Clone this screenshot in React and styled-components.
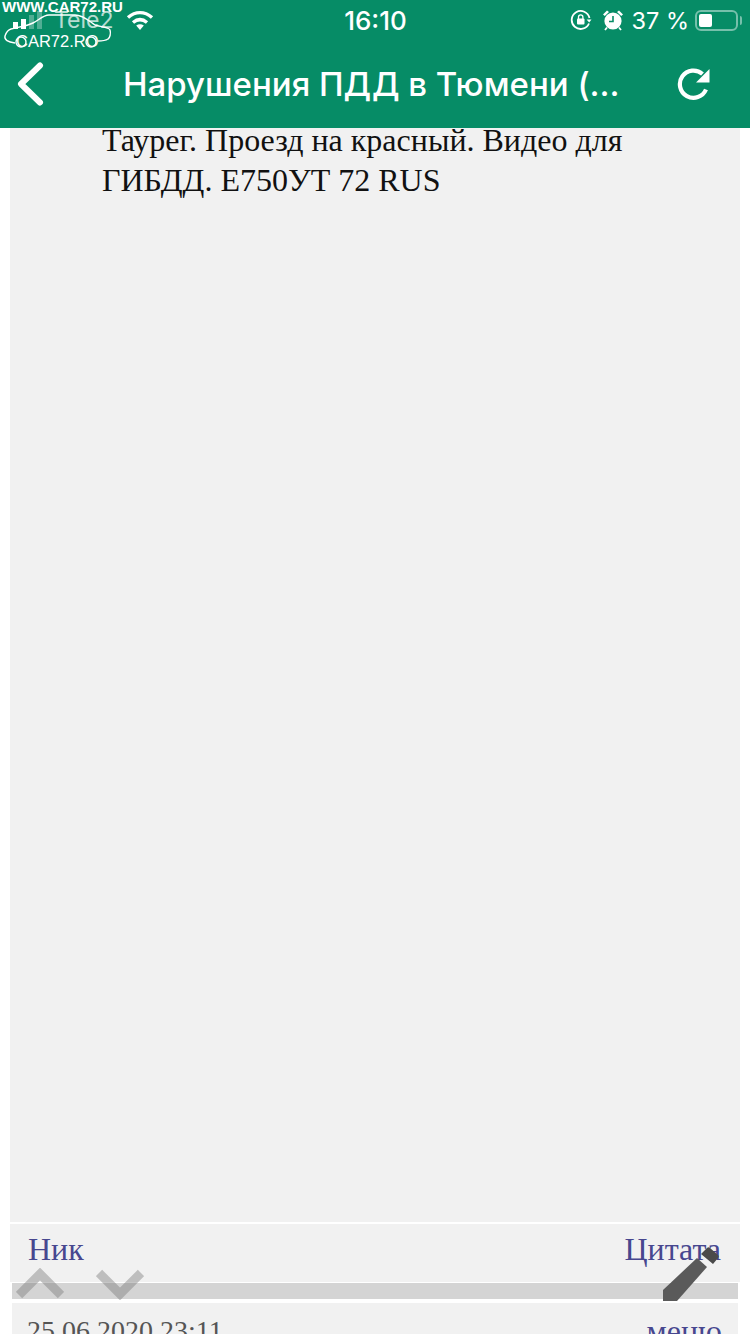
import styled, { createGlobalStyle } from 'styled-components';

const Global = createGlobalStyle`
	html, body {
		margin: 0;
		padding: 0;
		background: #fff;
	}
`

const Page = styled.div`
	position: relative;
	width: 750px;
	height: 1334px;
	overflow: hidden;
	display: flex;
	flex-direction: column;
	background: #fff;
`

const Header = styled.header`
	position: relative;
	z-index: 1;
	flex: none;
	height: 128px;
	background: #068c66;
	color: #fff;
	font-family: Inter, Roboto, sans-serif;
	display: flex;
	flex-direction: column;
`

const StatusBar = styled.div`
	height: 40px;
	padding: 0 12px 0 13px;
	display: grid;
	grid-template-columns: 1fr auto 1fr;
	align-items: center;
`

const StatusLeft = styled.div`
	display: flex;
	align-items: center;
	gap: 12px;
`

const StatusRight = styled.div`
	display: flex;
	align-items: center;
	justify-content: flex-end;
`

const Signal = styled.div`
	display: flex;
	align-items: flex-end;
	gap: 3px;
	height: 18px;
`

const SignalBar = styled.i`
	display: block;
	width: 5px;
	height: ${p => p.$h}px;
	background: ${p => p.$off ? 'rgba(255,255,255,.3)' : '#fff'};
`

const Carrier = styled.span`
	font-size: 23px;
	opacity: .7;
	line-height: 1;
`

const Clock = styled.span`
	font-size: 26px;
	font-weight: 500;
`

const StatusIcon = styled.svg`
	margin-right: ${p => p.$gap}px;
`

const Percent = styled.span`
	font-size: 23.5px;
	margin-right: 6px;
	white-space: nowrap;
`

const Battery = styled.div`
	position: relative;
	width: 43px;
	height: 21px;
	box-sizing: border-box;
	border: 2px solid rgba(255,255,255,.45);
	border-radius: 6px;
	padding: 2px;
	display: flex;

	&::after {
		content: '';
		position: absolute;
		right: -6px;
		top: 4px;
		width: 2px;
		height: 9px;
		border-radius: 0 2px 2px 0;
		background: rgba(255,255,255,.45);
	}
`

const BatteryFill = styled.div`
	width: 37%;
	background: #fff;
	border-radius: 2px;
`

const NavBar = styled.div`
	flex: 1;
	display: grid;
	grid-template-columns: 123px 1fr 130px;
	align-items: center;
`

const NavTitle = styled.div`
	font-size: 33px;
	font-weight: 500;
	white-space: nowrap;
`

const BackButton = styled.div`
	padding-left: 16px;
	display: flex;
`

const ReloadButton = styled.div`
	padding-left: 57px;
	display: flex;
`

const Content = styled.main`
	flex: 1;
	display: flex;
	flex-direction: column;
	padding: 0 10px;
	font-family: "Liberation Serif", serif;
`

const PostBody = styled.section`
	height: 1094px;
	flex: none;
	background: #f1f1f1;
	box-sizing: border-box;
	padding: 0 92px;
	font-size: 32px;
	line-height: 39.5px;
	color: #111;
`

const PostText = styled.p`
	margin: -7px 0 0;
`

const PostFooter = styled.div`
	flex: none;
	margin-top: 2px;
	height: 58px;
	background: #f1f1f1;
	box-sizing: border-box;
	padding: 6px 19px 0 18px;
	display: flex;
	justify-content: space-between;
	align-items: flex-start;
	font-size: 32px;
	line-height: 38px;
	color: #47478f;
`

const Separator = styled.div`
	flex: none;
	height: 16px;
	margin: 1px 2px 4px;
	background: #d4d4d4;
`

const PostHead = styled.div`
	flex: 1;
	margin: 0 2px;
	background: #f1f1f1;
	box-sizing: border-box;
	padding: 9px 16px 0 15px;
	display: flex;
	justify-content: space-between;
	align-items: flex-start;
	line-height: 38px;
`

const DateText = styled.span`
	font-size: 28px;
	color: #555;
`

const MenuLink = styled.span`
	font-size: 32px;
	color: #47478f;
`

const Watermark = styled.div`
	position: absolute;
	z-index: 2;
	left: 0;
	top: 0;
	width: 130px;
	height: 52px;
	color: #fff;
	font-family: "Liberation Sans", sans-serif;
`

const WatermarkUrl = styled.div`
	position: absolute;
	left: 2px;
	top: -2px;
	font-size: 15px;
	font-weight: 700;
	line-height: 18px;
	white-space: nowrap;
`

const WatermarkName = styled.div`
	position: absolute;
	left: 16px;
	top: 33px;
	font-size: 16.5px;
	line-height: 17px;
	white-space: nowrap;
`

const CarOutline = styled.svg`
	position: absolute;
	left: 0;
	top: 0;
`

const FloatIcon = styled.svg`
	position: absolute;
	z-index: 2;
	left: ${p => p.$x}px;
	top: ${p => p.$y}px;
`

export default function App() {
	return (
		<Page>
			<Global />
			<Header>
				<StatusBar>
					<StatusLeft>
						<Signal>
							<SignalBar $h={7} />
							<SignalBar $h={10} />
							<SignalBar $h={14} $off />
							<SignalBar $h={18} $off />
						</Signal>
						<Carrier>Tele2</Carrier>
						<svg width="30" height="22" viewBox="0 0 30 22" fill="none" stroke="#fff" strokeWidth="3.4">
							<path d="M3 8.5C10.5 2 19.5 2 27 8.5" />
							<path d="M8 13.5C12.5 9.8 17.5 9.8 22 13.5" />
							<path d="M15 21l-3.8-4.5c2.3-1.6 5.3-1.6 7.6 0z" fill="#fff" stroke="none" />
						</svg>
					</StatusLeft>
					<Clock>16:10</Clock>
					<StatusRight>
						<StatusIcon $gap={10} width="22" height="22" viewBox="0 0 22 22" fill="none" stroke="#fff" strokeWidth="1.8">
							<path d="M19 14.5A9 9 0 1 1 19.5 9" />
							<path d="M21.5 10.5l-2.3 3-2.6-3z" fill="#fff" stroke="none" />
							<rect x="7" y="9.5" width="7.5" height="6" rx="1" fill="#fff" stroke="none" />
							<path d="M8.5 10V8a2.2 2.2 0 0 1 4.4 0v2" strokeWidth="1.3" />
						</StatusIcon>
						<StatusIcon $gap={8} width="22" height="22" viewBox="0 0 22 22">
							<circle cx="11" cy="12" r="8.6" fill="#fff" />
							<path d="M11 7v5.5H7" fill="none" stroke="#068c66" strokeWidth="1.6" />
							<path d="M1 5.5L5 1.5 7 3 2.8 7zM21 5.5L17 1.5 15 3 19.2 7z" fill="#fff" />
							<path d="M5 18.5l-2 2.5M17 18.5l2 2.5" stroke="#fff" strokeWidth="1.8" />
						</StatusIcon>
						<Percent>37 %</Percent>
						<Battery>
							<BatteryFill />
						</Battery>
					</StatusRight>
				</StatusBar>
				<NavBar>
					<BackButton>
						<svg width="30" height="44" viewBox="0 0 30 44" fill="none" stroke="#fff" strokeWidth="6" strokeLinecap="round" strokeLinejoin="round">
							<path d="M24 3.5L5 22l19 18.5" />
						</svg>
					</BackButton>
					<NavTitle>Нарушения ПДД в Тюмени (...</NavTitle>
					<ReloadButton>
						<svg width="34" height="34" viewBox="0 0 34 34" fill="none" stroke="#fff" strokeWidth="4.2">
							<path d="M29 22.5A13.6 13.6 0 1 1 25.5 7" />
							<path d="M32.5 2v13.5H19z" fill="#fff" stroke="none" />
						</svg>
					</ReloadButton>
				</NavBar>
			</Header>
			<Content>
				<PostBody>
					<PostText>Таурег. Проезд на красный. Видео для ГИБДД. Е750УТ 72 RUS</PostText>
				</PostBody>
				<PostFooter>
					<span>Ник</span>
					<span>Цитата</span>
				</PostFooter>
				<Separator />
				<PostHead>
					<DateText>25.06.2020 23:11</DateText>
					<MenuLink>меню</MenuLink>
				</PostHead>
			</Content>
			<FloatIcon $x={16} $y={1268} width="48" height="32" viewBox="0 0 48 32" fill="none" stroke="rgba(120,120,120,.42)" strokeWidth="9">
				<path d="M3 27L24 6l21 21" />
			</FloatIcon>
			<FloatIcon $x={96} $y={1268} width="48" height="32" viewBox="0 0 48 32" fill="none" stroke="rgba(120,120,120,.42)" strokeWidth="9">
				<path d="M3 5l21 21L45 5" />
			</FloatIcon>
			<FloatIcon $x={662} $y={1246} width="58" height="56" viewBox="0 0 58 56">
				<path d="M1 44V55H15L45 21 35 12z" fill="#5a5a5a" />
				<path d="M39 8l6-6c1-1 2-1 3 0l8 7c1 1 1 2 0 3l-5 6z" fill="#4a4a4a" />
			</FloatIcon>
			<Watermark>
				<WatermarkUrl>WWW.CAR72.RU</WatermarkUrl>
				<CarOutline width="130" height="52" viewBox="0 0 130 52" fill="none" stroke="#fff" strokeWidth="1.4">
					<path d="M15 43C8 42 4 40 5 36c1-3 2-6 6-7 8-2 16-3 22-6 6-3 10-8 16-8h26c8 0 14 6 20 10 5 2 14 2 15 5 1 3 0 8-2 9-3 2-7 2-10 2" />
					<circle cx="21" cy="42" r="5" />
					<circle cx="91" cy="42" r="5" />
				</CarOutline>
				<WatermarkName>CAR72.RO</WatermarkName>
			</Watermark>
		</Page>
	);
}
